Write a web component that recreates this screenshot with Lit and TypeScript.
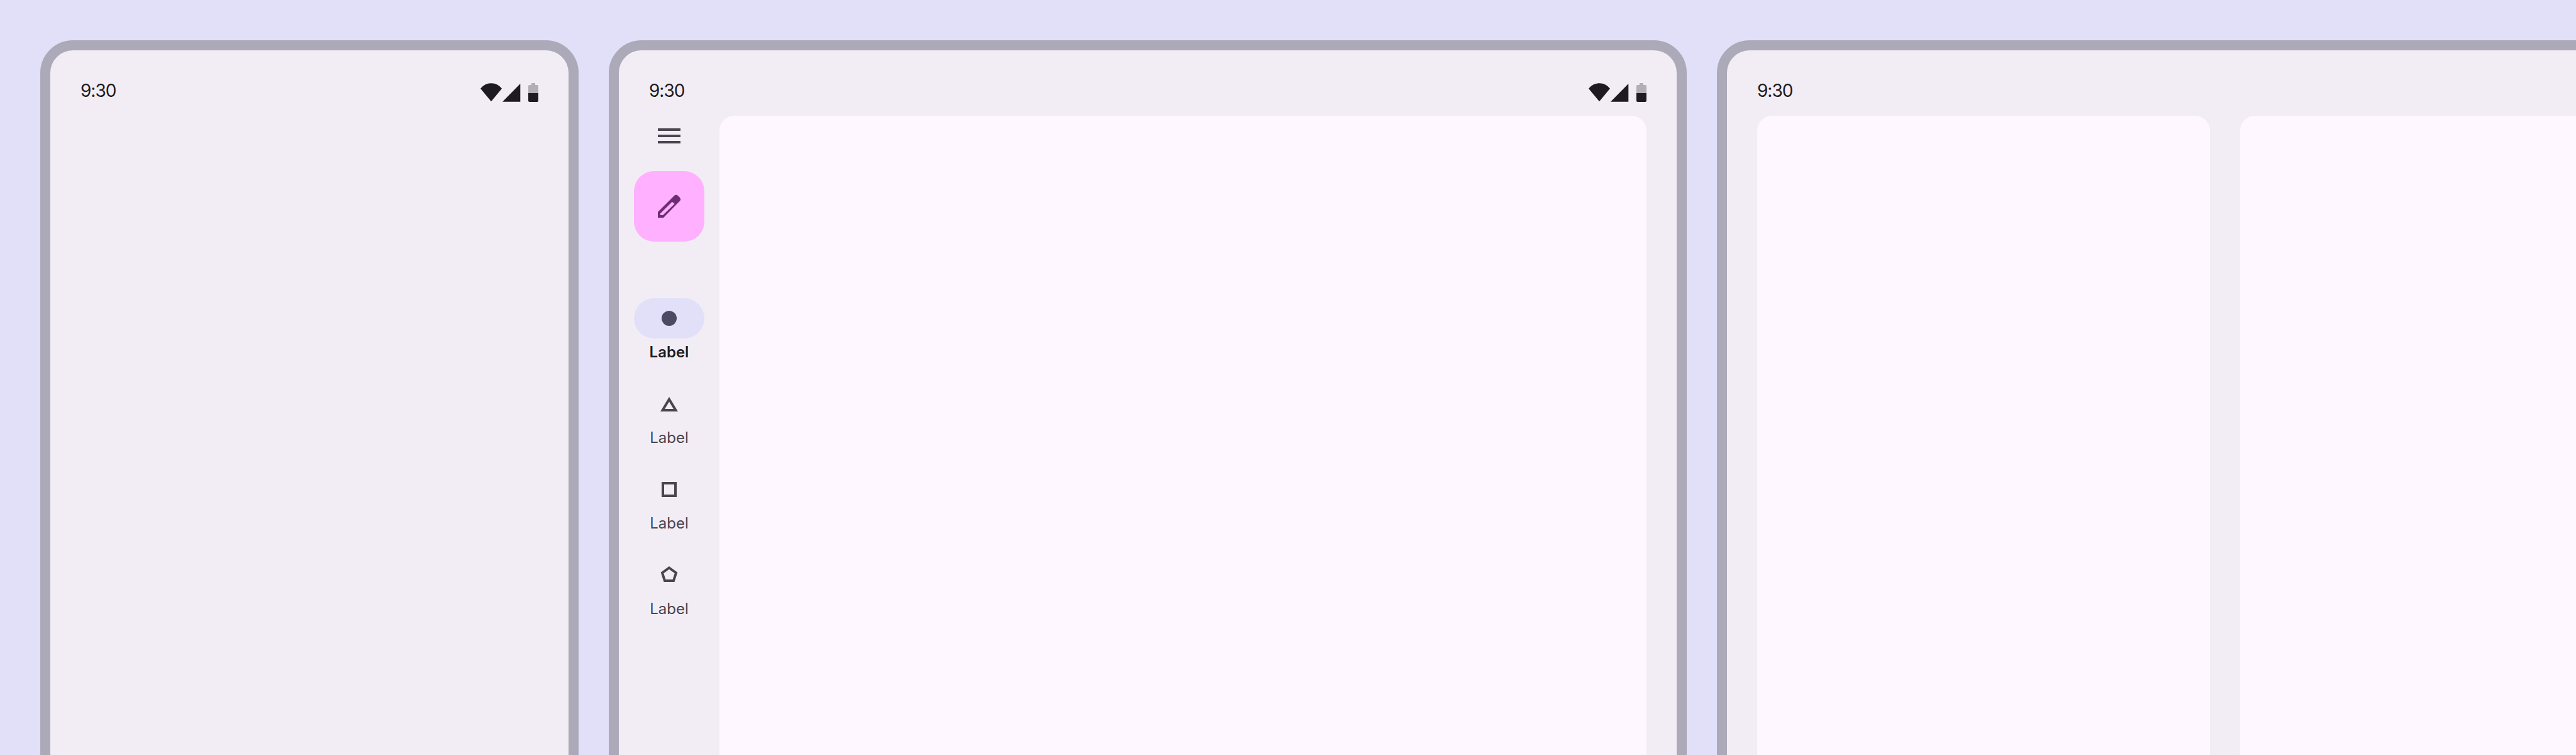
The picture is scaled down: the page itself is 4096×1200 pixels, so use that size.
import { LitElement, html, css, svg } from "lit";
import { customElement } from "lit/decorators.js";

const statusIcons = html`<svg class="sys" width="92" height="30" viewBox="0 0 92 30">
  <path fill="#1d1b20" d="M17 29.2 0 8.8A21 21 0 0 1 34 8.8Z"/>
  <path fill="#1d1b20" d="M35 29.7 63.3 1V29.7Z"/>
  <path fill="#b3aeb5" d="M81 0H87V3H90Q92 3 92 5V16H76V5Q76 3 78 3H81Z"/>
  <path fill="#1d1b20" d="M76 16H92V28Q92 30 90 30H78Q76 30 76 28Z"/>
</svg>`;

const shapes = [
  svg`<circle cx="24" cy="24" r="12" fill="#4a4a64"/>`,
  svg`<path fill="#49454f" fill-rule="evenodd" d="M24 12.7 38 36H10ZM24 20.5 17.1 32H30.9Z"/>`,
  svg`<rect x="14" y="14" width="20" height="20" fill="none" stroke="#49454f" stroke-width="4"/>`,
  svg`<path fill="none" stroke="#49454f" stroke-width="4" d="M24 12.5 35 20.5 31 33H17L13 20.5Z"/>`,
];

@customElement("app-root")
export class AppRoot extends LitElement {
  static styles = css`
    :host {
      display: block;
      width: 4096px;
      height: 1200px;
      overflow: hidden;
      background: #e2e0f9;
      font-family: Inter, "Noto Sans", sans-serif;
    }
    .row {
      display: flex;
      gap: 48px;
      padding: 64px 0 0 64px;
      width: max-content;
    }
    .frame {
      box-sizing: border-box;
      height: 1400px;
      border: 16px solid #acaab9;
      border-radius: 52px;
      background: #f2edf4;
      display: flex;
      flex-direction: column;
    }
    .phone { width: 856px; }
    .fold { width: 1714px; }
    .tablet { width: 1888px; }
    .status {
      box-sizing: border-box;
      height: 104px;
      flex: none;
      padding: 52px 48px 0;
      display: flex;
      justify-content: space-between;
      align-items: flex-start;
    }
    .time {
      font-size: 28px;
      line-height: 24px;
      letter-spacing: -1px;
      color: #1d1b20;
    }
    .sys { display: block; }
    .body {
      flex: 1;
      display: flex;
      min-height: 0;
      padding-right: 48px;
    }
    .split { gap: 48px; padding-left: 48px; }
    .rail {
      width: 160px;
      flex: none;
      margin-top: 8px;
      display: flex;
      flex-direction: column;
      align-items: center;
    }
    .menu { display: block; margin-bottom: 32px; }
    .fab {
      width: 112px;
      height: 112px;
      border-radius: 32px;
      background: #ffb0ff;
      display: flex;
      align-items: center;
      justify-content: center;
      margin-bottom: 90px;
    }
    .item {
      display: flex;
      flex-direction: column;
      align-items: center;
      gap: 6px;
      margin-bottom: 34px;
    }
    .pill {
      width: 112px;
      height: 64px;
      border-radius: 32px;
      display: flex;
      align-items: center;
      justify-content: center;
    }
    .active .pill { background: #e2e0f9; }
    .label {
      font-size: 24px;
      line-height: 32px;
      color: #49454f;
    }
    .active .label { color: #1d1b20; font-weight: 600; }
    .pane {
      flex: 1;
      background: #fef7ff;
      border-radius: 24px 24px 0 0;
    }
    .fixed { flex: 0 0 720px; }
  `;

  private status(icons = true) {
    return html`<div class="status"><span class="time">9:30</span>${icons ? statusIcons : ""}</div>`;
  }

  render() {
    return html`<div class="row">
      <div class="frame phone">${this.status()}</div>
      <div class="frame fold">
        ${this.status()}
        <div class="body">
          <nav class="rail">
            <svg class="menu" width="48" height="48" viewBox="0 0 24 24" fill="#49454f"><path d="M3 18h18v-2H3v2zm0-5h18v-2H3v2zm0-7v2h18V6H3z"/></svg>
            <div class="fab">
              <svg width="48" height="48" viewBox="0 0 48 48" fill="#6e2c73"><path fill-rule="evenodd" d="M6 42V33L32.6 6.6Q35.5 4.8 38 7L41 10Q43 12.5 41.4 15L15 42ZM10 38H14L32.7 20 28.7 16.7 10 35.3Z"/></svg>
            </div>
            ${shapes.map(
              (s, i) => html`<div class="item ${i === 0 ? "active" : ""}">
                <div class="pill"><svg width="48" height="48" viewBox="0 0 48 48">${s}</svg></div>
                <span class="label">Label</span>
              </div>`
            )}
          </nav>
          <div class="pane"></div>
        </div>
      </div>
      <div class="frame tablet">
        ${this.status()}
        <div class="body split">
          <div class="pane fixed"></div>
          <div class="pane"></div>
        </div>
      </div>
    </div>`;
  }
}
